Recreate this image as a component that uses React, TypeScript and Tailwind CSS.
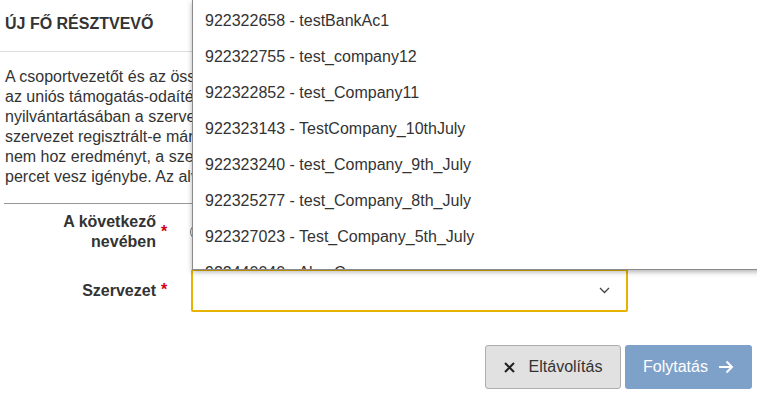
import React from "react";

const options = [
  "922322658 - testBankAc1",
  "922322755 - test_company12",
  "922322852 - test_Company11",
  "922323143 - TestCompany_10thJuly",
  "922323240 - test_Company_9th_July",
  "922325277 - test_Company_8th_July",
  "922327023 - Test_Company_5th_July",
  "922440040 - Alex Company",
];

const intro = [
  "A csoportvezetőt és az összes résztvevő szervezetet regisztrálni kell",
  "az uniós támogatás-odaítélési és -kezelési rendszer (Résztvevői)",
  "nyilvántartásában a szervezet azonosítóval. Kérjük, ellenőrizze, hogy a",
  "szervezet regisztrált-e már. Ha a keresés a szervezet neve alapján",
  "nem hoz eredményt, a szervezetet regisztrálni kell, ami általában 15",
  "percet vesz igénybe. Az alvállalkozókat nem kell regisztrálni.",
];

const Required = () => <span className="ml-[5px] text-[#d0021b] font-bold">*</span>;

export default function App() {
  return (
    <div className="relative w-[757px] h-[394px] overflow-hidden bg-white text-[#333] text-[16px] font-['Liberation_Sans',Arial,sans-serif]">
      {/* header */}
      <div className="h-[52px] border-b border-[#ddd] px-[5px] pt-[14px]">
        <h2 className="font-bold leading-[20px]">ÚJ FŐ RÉSZTVEVŐ</h2>
      </div>

      <div className="px-[5px] mt-[15px] leading-[20px]">
        {intro.map((line) => (
          <div key={line} className="whitespace-nowrap">{line}</div>
        ))}
      </div>

      <div className="ml-[4px] mt-[16px] border-t border-[#999]" />

      {/* form */}
      <div className="mt-[8px] flex">
        <div className="w-[156px] flex justify-end items-center font-bold leading-[20px] text-right">
          <span>
            A következő
            <br />
            nevében
          </span>
        </div>
        <div className="w-[14px] flex items-center">
          <Required />
        </div>
        <div className="ml-[20px] flex items-center gap-2">
          <span className="w-[16px] h-[16px] rounded-full border border-[#767676] bg-white" />
          <span>Saját szervezet</span>
        </div>
      </div>

      <div className="mt-[17px] flex items-center">
        <div className="w-[156px] text-right font-bold leading-[20px]">Szervezet</div>
        <div className="w-[14px] -mt-[2px]">
          <Required />
        </div>
        <div className="ml-[21px] w-[437px] h-[43px] border-2 border-[#e6b400] rounded-[2px] flex items-center justify-end pr-[16px]">
          <svg width="11" height="7" viewBox="0 0 11 7" fill="none">
            <path d="M1 1l4.5 4.5L10 1" stroke="#444" strokeWidth="1.3" />
          </svg>
        </div>
      </div>

      {/* actions */}
      <div className="mt-[33px] flex justify-end gap-[4px] pr-[5px]">
        <button className="w-[136px] h-[44px] bg-[#e1e1e1] border border-[#adadad] rounded-[3px] flex items-center justify-center gap-[14px] text-[#333]">
          <svg width="11" height="11" viewBox="0 0 11 11">
            <path d="M1 1l9 9M10 1l-9 9" stroke="#222" strokeWidth="2" />
          </svg>
          <span>Eltávolítás</span>
        </button>
        <button className="w-[127px] h-[44px] bg-[#7ea1c9] rounded-[3px] flex items-center justify-center gap-[10px] text-white">
          <span>Folytatás</span>
          <svg width="16" height="14" viewBox="0 0 16 14" fill="none">
            <path d="M1 7h13M8.5 1.5L14 7l-5.5 5.5" stroke="#fff" strokeWidth="2" />
          </svg>
        </button>
      </div>

      {/* open dropdown list */}
      <div className="absolute left-[192px] top-0 w-[580px] h-[270px] bg-white border-l border-b border-[#8a8a8a] shadow-[0_2px_5px_rgba(0,0,0,0.3)] overflow-hidden pt-[3px]">
        {options.map((o) => (
          <div key={o} className="h-[36px] flex items-center pl-[12px] whitespace-nowrap">
            {o}
          </div>
        ))}
      </div>
    </div>
  );
}
